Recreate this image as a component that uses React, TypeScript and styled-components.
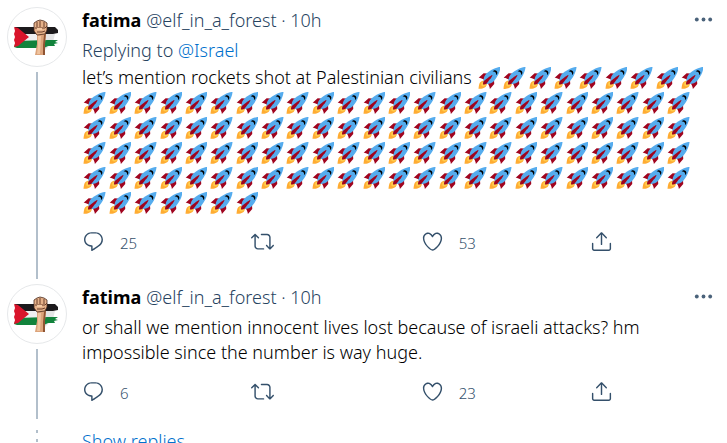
import React from "react";
import styled, { createGlobalStyle } from "styled-components";

const GlobalStyle = createGlobalStyle`
  * { box-sizing: border-box; }
  body {
    margin: 0;
    background: #fff;
    overflow: hidden;
    font-family: "Noto Sans", "Open Sans", sans-serif;
    font-size: 18px;
    font-weight: 300;
    line-height: 25px;
    color: #000;
  }
`;

const Thread = styled.main`
  width: 100%;
  padding-top: 2px;
`;

const Tweet = styled.article`
  display: flex;
  gap: 15px;
  padding: 5px 12px 0 7px;
`;

const Rail = styled.div`
  flex: none;
  width: 60px;
  display: flex;
  flex-direction: column;
  align-items: center;
  gap: 5px;
`;

const AvatarLink = styled.a`
  display: block;
  width: 60px;
  height: 60px;
  border: 1px solid #e6e8ea;
  border-radius: 50%;
  overflow: hidden;

  svg { display: block; width: 100%; height: 100%; }
`;

const Connector = styled.div`
  flex: 1;
  width: 2px;
  background: #b2bfcb;
`;

const Body = styled.div<{ $end: number }>`
  flex: 1;
  min-width: 0;
  padding-top: 1px;
  padding-bottom: ${(p) => p.$end}px;
`;

const Header = styled.header`
  display: flex;
  align-items: flex-start;
  gap: 5px;
  margin-bottom: 5px;
  white-space: nowrap;
`;

const Name = styled.a`
  color: #000;
  font-weight: 700;
  text-decoration: none;
`;

const Meta = styled.span`
  color: #27435f;
`;

const MoreButton = styled.button`
  margin-left: auto;
  padding: 0;
  border: 0;
  background: none;
  color: #4a627a;
  height: 23px;
  cursor: pointer;

  svg { display: block; width: 23px; height: 23px; fill: currentColor; }
`;

const Replying = styled.div`
  margin-bottom: 2px;
  color: #27435f;
`;

const BlueLink = styled.a`
  color: #0070cc;
  text-decoration: none;
`;

const Text = styled.p`
  margin: 0;
  padding-right: 1px;
`;

const RocketIcon = styled.svg`
  width: 1.25em;
  height: 1.25em;
  margin: 0 0.08em;
  vertical-align: -5px;
`;

const Actions = styled.div`
  display: grid;
  grid-template-columns: repeat(3, 1fr) auto;
  max-width: 531px;
  margin-top: 15px;
`;

const Action = styled.button`
  display: flex;
  align-items: flex-start;
  gap: 15px;
  height: 25px;
  padding: 0;
  border: 0;
  background: none;
  color: #34506b;
  font: inherit;
  font-size: 15px;
  line-height: 23px;
  cursor: pointer;

  svg { width: 23px; height: 23px; fill: currentColor; }
  span { padding-top: 2px; }
`;

const ShowReplies = styled.a`
  display: flex;
  gap: 15px;
  padding: 10px 12px 0 7px;
  color: #0070cc;
  text-decoration: none;
`;

const Dots = styled.span`
  flex: none;
  width: 60px;
  display: flex;
  flex-direction: column;
  align-items: center;
  gap: 6px;
  padding-top: 1px;

  i { width: 2px; height: 3px; background: #b2bfcb; }
`;

const Rocket = () => (
  <RocketIcon viewBox="0 0 36 36" role="img" aria-label="rocket">
    <path fill="#A0041E" d="M1 17l8-7 16 1 1 16-7 8s.001-5.999-6-12-12-6-12-6z" />
    <path fill="#FFAC33" d="M.973 35s-.036-7.979 2.985-11S15 21.187 15 21.187 14.999 29 11.999 32c-3 3-11.026 3-11.026 3z" />
    <circle fill="#FFCC4D" cx="8.999" cy="27" r="4" />
    <path fill="#55ACEE" d="M35.999 0s-10 0-22 10c-6 5-6 14-4 16s11 2 16-4c10-12 10-22 10-22z" />
    <path d="M26.999 5c-1.623 0-3.013.971-3.641 2.36.502-.227 1.055-.36 1.641-.36 2.209 0 4 1.791 4 4 0 .586-.133 1.139-.359 1.64 1.389-.627 2.359-2.017 2.359-3.64 0-2.209-1.791-4-4-4z" />
    <path fill="#A0041E" d="M8 28s0-4 1-5 13.001-10.999 14-10-9.001 13-10.001 14S8 28 8 28z" />
  </RocketIcon>
);

const Avatar = () => (
  <AvatarLink href="#profile" aria-label="fatima">
    <svg viewBox="0 0 58 58">
      <path fill="#d9dadb" d="M36 26l11 0-2 8-8 8z" opacity=".7" />
      <path fill="#eeeff0" d="M12 25h26v9H12z" />
      <path fill="#1c1a1c" d="M7 19l32 0 8 0 3 3 0 3-5 1-35 0-3-2z" />
      <path fill="#12833c" d="M8 33l32-1 10 0-3 2 3 1-4 1 1 2-7 0-4 2-27 0-3-1z" />
      <path fill="#d9142b" d="M6 19l4 1 11 9-11 9-4 1 1-4-1-3 1-3-1-3 1-3z" />
      <path fill="#dca47b" d="M29 26l9 0-1 9 0 12-10 0 2-11z" />
      <path fill="#8f5432" d="M36 27l2-2-1 11 0 11-2 0 0-10z" />
      <path fill="#f0c39e" d="M30 28l3 0-1 18-3 0 1-9z" />
      <path fill="#e6b28a" stroke="#4a2a1c" strokeWidth=".8" d="M26 17l0-2 3-2 3-1 4 1 3 2 0 7-2 4-8 1-3-4z" />
      <path fill="none" stroke="#6b3f2a" strokeWidth="1" d="M29 14l0 5M32 13l0 6M36 14l0 5M27 20l10 0 2-2M29 24l5 0 3-1" />
      <path fill="#f5cba5" d="M29 20h5v2h-5z" />
    </svg>
  </AvatarLink>
);

const paths = {
  reply: ["M14.046 2.242l-4.148-.01h-.002c-4.374 0-7.8 3.427-7.8 7.802 0 4.098 3.186 7.206 7.465 7.37v3.828c0 .108.044.286.12.403.142.225.384.347.632.347.138 0 .277-.038.402-.118.264-.168 6.473-4.14 8.088-5.506 1.902-1.61 3.04-3.97 3.043-6.312v-.017c-.006-4.367-3.43-7.787-7.8-7.788zm3.787 12.972c-1.134.96-4.862 3.405-6.772 4.643V16.67c0-.414-.335-.75-.75-.75h-.396c-3.66 0-6.318-2.476-6.318-5.886 0-3.534 2.768-6.302 6.3-6.302l4.147.01h.002c3.532 0 6.3 2.766 6.302 6.296-.003 1.91-.942 3.844-2.514 5.176z"],
  retweet: ["M23.77 15.67c-.292-.293-.767-.293-1.06 0l-2.22 2.22V7.65c0-2.068-1.683-3.75-3.75-3.75h-5.85c-.414 0-.75.336-.75.75s.336.75.75.75h5.85c1.24 0 2.25 1.01 2.25 2.25v10.24l-2.22-2.22c-.293-.293-.768-.293-1.06 0s-.294.768 0 1.06l3.5 3.5c.145.147.337.22.53.22s.383-.072.53-.22l3.5-3.5c.294-.292.294-.767 0-1.06zm-10.66 3.28H7.26c-1.24 0-2.25-1.01-2.25-2.25V6.46l2.22 2.22c.148.147.34.22.532.22s.384-.073.53-.22c.293-.293.293-.768 0-1.06l-3.5-3.5c-.293-.294-.768-.294-1.06 0l-3.5 3.5c-.294.292-.294.767 0 1.06s.767.293 1.06 0l2.22-2.22V16.7c0 2.068 1.683 3.75 3.75 3.75h5.85c.414 0 .75-.336.75-.75s-.337-.75-.75-.75z"],
  like: ["M12 21.638h-.014C9.403 21.59 1.95 14.856 1.95 8.478c0-3.064 2.525-5.754 5.403-5.754 2.29 0 3.83 1.58 4.646 2.73.814-1.148 2.354-2.73 4.645-2.73 2.88 0 5.404 2.69 5.404 5.755 0 6.376-7.454 13.11-10.037 13.157H12zM7.354 4.225c-2.08 0-3.903 1.988-3.903 4.255 0 5.74 7.034 11.596 8.55 11.658 1.518-.062 8.55-5.917 8.55-11.658 0-2.267-1.823-4.255-3.903-4.255-2.528 0-3.94 2.936-3.952 2.965-.23.562-1.156.562-1.387 0-.014-.03-1.425-2.965-3.954-2.965z"],
  share: [
    "M17.53 7.47l-5-5c-.293-.293-.768-.293-1.06 0l-5 5c-.294.293-.294.768 0 1.06s.767.294 1.06 0l3.72-3.72V15c0 .414.336.75.75.75s.75-.336.75-.75V4.81l3.72 3.72c.146.147.338.22.53.22s.384-.072.53-.22c.293-.293.293-.767 0-1.06z",
    "M19.708 21.944H4.292C3.028 21.944 2 20.916 2 19.652V14c0-.414.336-.75.75-.75s.75.336.75.75v5.652c0 .437.355.792.792.792h15.416c.437 0 .792-.355.792-.792V14c0-.414.336-.75.75-.75s.75.336.75.75v5.652c0 1.264-1.028 2.292-2.292 2.292z",
  ],
};

type IconName = keyof typeof paths;

const ActionButton = ({ icon, label, count }: { icon: IconName; label: string; count?: number }) => (
  <Action type="button" aria-label={count === undefined ? label : `${count} ${label}`}>
    <svg viewBox="0 0 24 24" aria-hidden="true">
      {paths[icon].map((d) => <path key={d} d={d} />)}
    </svg>
    {count !== undefined && <span>{count}</span>}
  </Action>
);

type TweetProps = {
  replies: number;
  likes: number;
  end: number;
  replyingTo?: string;
  children: React.ReactNode;
};

const TweetItem = ({ replies, likes, end, replyingTo, children }: TweetProps) => (
  <Tweet>
    <Rail>
      <Avatar />
      <Connector />
    </Rail>
    <Body $end={end}>
      <Header>
        <Name href="#profile">fatima</Name>
        <Meta>@elf_in_a_forest · 10h</Meta>
        <MoreButton type="button" aria-label="More">
          <svg viewBox="0 0 24 24" aria-hidden="true">
            <circle cx="5" cy="12" r="2" />
            <circle cx="12" cy="12" r="2" />
            <circle cx="19" cy="12" r="2" />
          </svg>
        </MoreButton>
      </Header>
      {replyingTo && (
        <Replying>
          Replying to <BlueLink href="#replying-to">{replyingTo}</BlueLink>
        </Replying>
      )}
      <Text>{children}</Text>
      <Actions>
        <ActionButton icon="reply" label="Reply" count={replies} />
        <ActionButton icon="retweet" label="Retweet" />
        <ActionButton icon="like" label="Like" count={likes} />
        <ActionButton icon="share" label="Share" />
      </Actions>
    </Body>
  </Tweet>
);

export default function App() {
  return (
    <>
      <GlobalStyle />
      <Thread>
        <TweetItem replies={25} likes={53} end={24} replyingTo="@Israel">
          let’s mention rockets shot at Palestinian civilians{" "}
          {Array.from({ length: 112 }, (_, i) => <Rocket key={i} />)}
        </TweetItem>
        <TweetItem replies={6} likes={23} end={14}>
          or shall we mention innocent lives lost because of israeli attacks? hm
          impossible since the number is way huge.
        </TweetItem>
        <ShowReplies href="#replies">
          <Dots aria-hidden="true"><i /><i /><i /></Dots>
          Show replies
        </ShowReplies>
      </Thread>
    </>
  );
}
